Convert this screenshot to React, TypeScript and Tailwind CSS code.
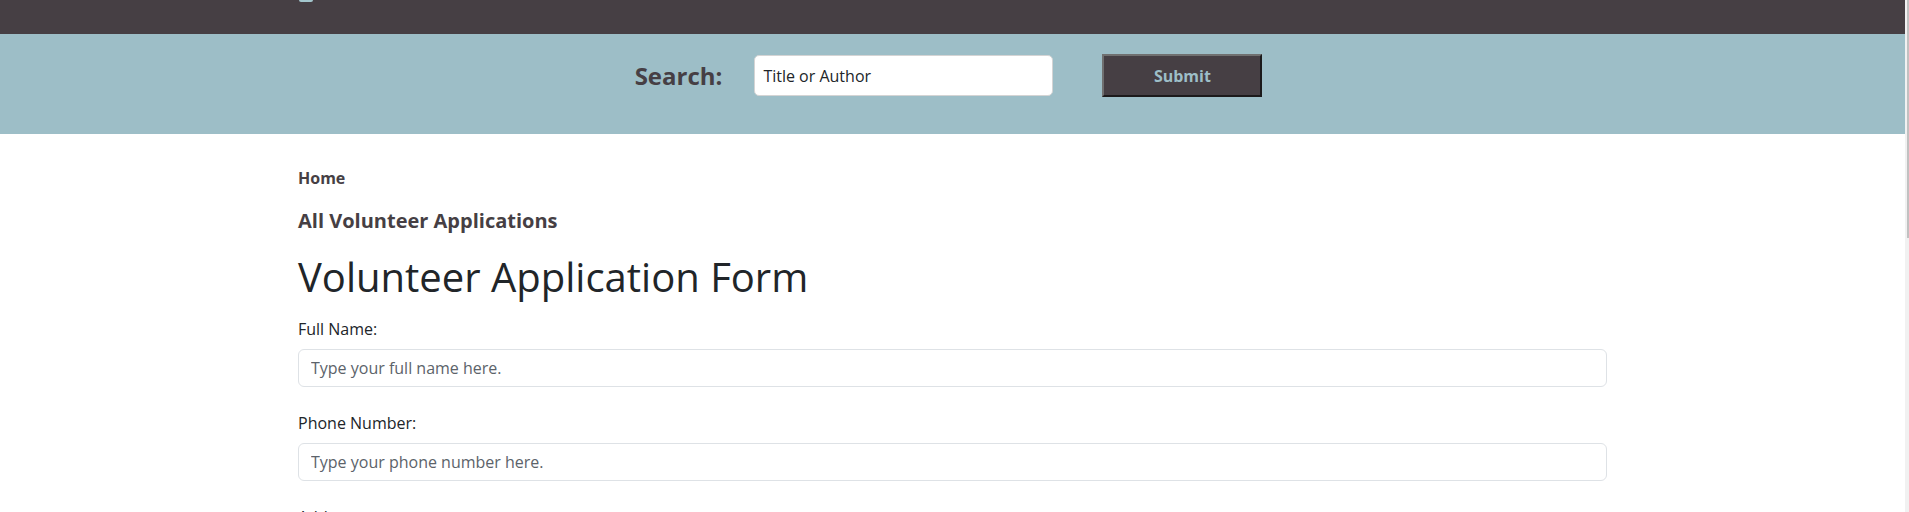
import React from "react";

export default function App() {
  return (
    <div className="flex h-[512px] w-full overflow-hidden bg-white font-['Open_Sans',sans-serif]">
      <div className="min-w-0 flex-1">
        {/* Barre du haut */}
        <div className="h-[34px] bg-[#463f44]">
          <div className="mx-auto w-[1309px]">
            <div className="ml-[1px] h-[2px] w-[14px] rounded-b-full bg-[#a3c6cd]"></div>
          </div>
        </div>

        {/* Bande de recherche */}
        <div className="flex h-[100px] justify-center bg-[#9dbec7] pt-[20px]">
          <div className="ml-[-8px] flex h-[43px] items-center">
            <span className="text-[24px] font-bold text-[#463f44]">Search:</span>
            <input
              type="text"
              defaultValue="Title or Author"
              className="ml-[32px] h-[41px] w-[299px] rounded-[5px] border border-[#d4d4d4] bg-white px-[8px] text-[16px] text-[#212529] outline-none"
            />
            <button className="ml-[49px] h-[43px] w-[160px] border-2 border-t-[#707070] border-l-[#707070] border-r-[#1c1a1b] border-b-[#1c1a1b] bg-[#463f44] text-[16px] font-bold text-[#9dbec7]">
              Submit
            </button>
          </div>
        </div>

        {/* Contenu */}
        <div className="mx-auto w-[1309px] pt-[32px]">
          <div className="text-[16px] leading-[24px] font-bold text-[#463f44]">Home</div>
          <div className="mt-[19px] text-[20px] leading-[24px] font-bold text-[#463f44]">All Volunteer Applications</div>
          <h1 className="mt-[20px] text-[40px] leading-[48px] text-[#212529]">Volunteer Application Form</h1>

          <div className="mt-[16px] flex flex-col">
            <label className="text-[16px] leading-[24px] text-[#212529]">Full Name:</label>
            <input
              type="text"
              placeholder="Type your full name here."
              className="mt-[8px] h-[38px] w-full rounded-[6px] border border-[#dee2e6] px-[12px] text-[16px] text-[#212529] outline-none placeholder:text-[#5c636a]"
            />
            <label className="mt-[24px] text-[16px] leading-[24px] text-[#212529]">Phone Number:</label>
            <input
              type="text"
              placeholder="Type your phone number here."
              className="mt-[8px] h-[38px] w-full rounded-[6px] border border-[#dee2e6] px-[12px] text-[16px] text-[#212529] outline-none placeholder:text-[#5c636a]"
            />
            <label className="mt-[24px] text-[16px] leading-[24px] text-[#212529]">Address:</label>
          </div>
        </div>
      </div>

      {/* Barre de défilement */}
      <div className="w-[4px] shrink-0 bg-[#f1f1f1] pl-[2px]">
        <div className="h-[238px] bg-[#c1c1c1]"></div>
      </div>
    </div>
  );
}
